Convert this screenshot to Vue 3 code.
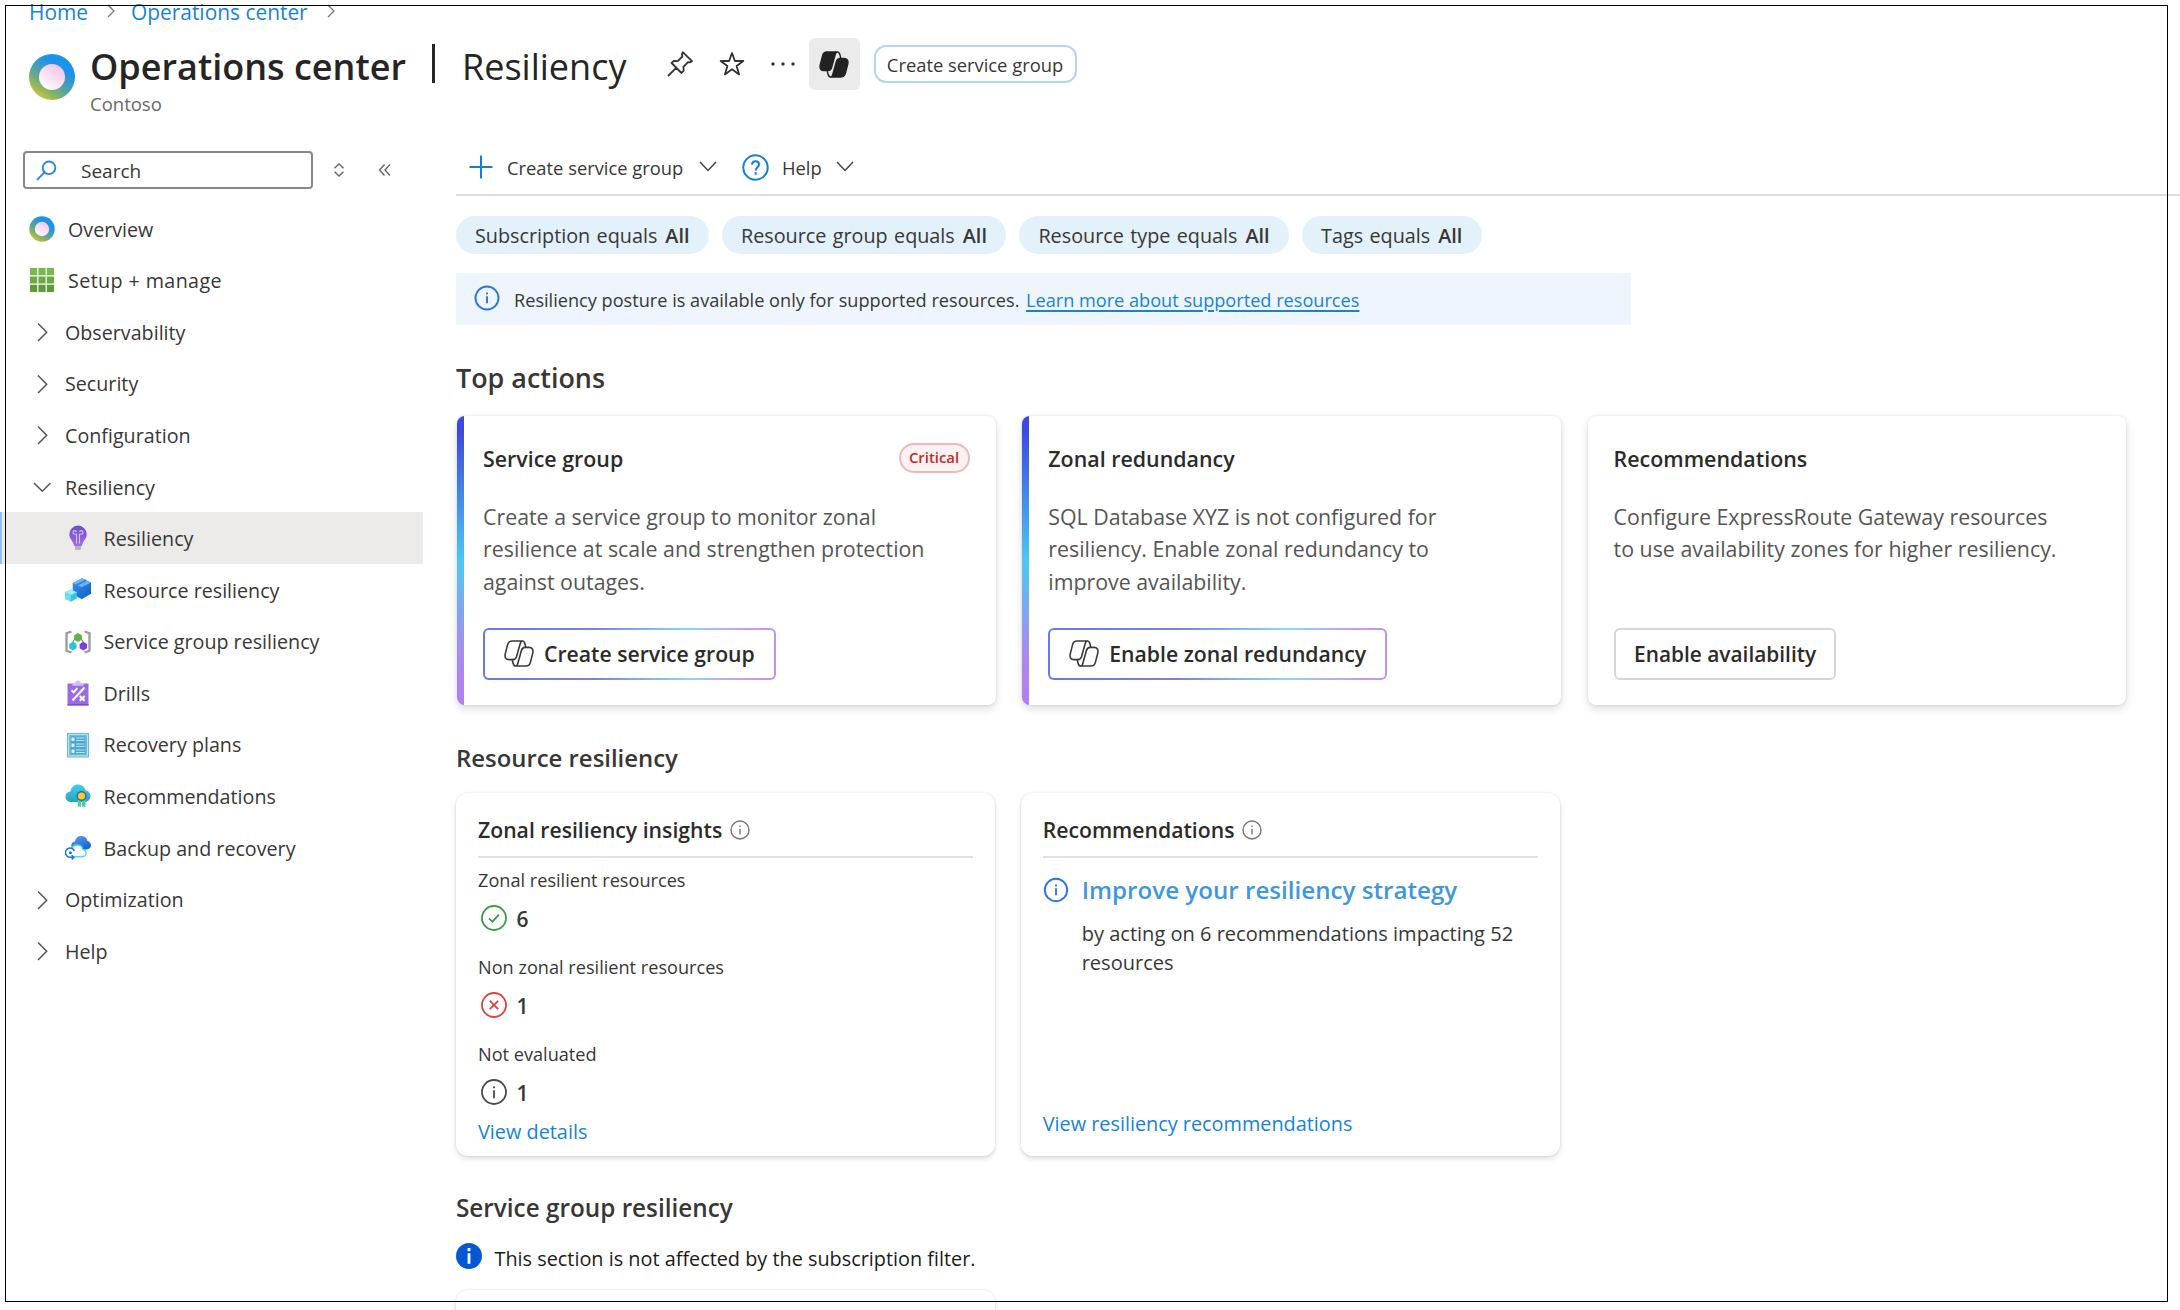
<script setup>
const ring = (id) => `
  <defs>
    <linearGradient id="${id}" x1="0.75" y1="0.1" x2="0.2" y2="0.95">
      <stop offset="0.2" stop-color="#1b93eb"/><stop offset="0.55" stop-color="#57a3a0"/>
      <stop offset="0.8" stop-color="#8fb65a"/><stop offset="1" stop-color="#d8c63c"/>
    </linearGradient>
    <linearGradient id="${id}c" x1="0.8" y1="0" x2="0.2" y2="1">
      <stop offset="0" stop-color="#f6bfe6"/><stop offset="1" stop-color="#ffffff"/>
    </linearGradient>
  </defs>
  <circle cx="23" cy="23" r="23" fill="url(#${id})"/><circle cx="23" cy="23" r="13" fill="url(#${id}c)"/>`

const leaf = 'M18.3 1H8C5.6 1 4.300 2 3.600 4.600L1.300 13.600C.4 17.400 1.800 19.600 5 19.600H9C11 19.600 12 18.400 12.600 16.500L16 4.300C16.500 2.200 17 1 18.300 1Z'
const tail = 'M18.300 1C20 1 20.600 2.200 21 4L21.800 7.400'

const icons = {
  overview: { box: '-0.5 -0.5 47 47', svg: ring('ov') },
  grid: {
    box: '0 0 26 26',
    svg: `<g fill="#7ab648"><path d="M1 1h7.2v7.2H1zM9.4 1h7.2v7.2H9.4zM17.8 1H25v7.2h-7.2z" fill="#79b84c"/>
      <path d="M1 9.4h7.2v7.2H1zM9.4 9.4h7.2v7.2H9.4zM17.8 9.4H25v7.2h-7.2z" fill="#6ea944"/>
      <path d="M1 17.8h7.2V25H1zM9.4 17.8h7.2V25H9.4zM17.8 17.8H25V25h-7.2z" fill="#5f993a"/></g>`
  },
  bulb: {
    box: '0 0 26 26',
    svg: `<defs><linearGradient id="bl" x1="0" y1="0" x2="0" y2="1"><stop offset="0" stop-color="#6a4cc8"/><stop offset="1" stop-color="#a66cf0"/></linearGradient></defs>
      <path d="M13 .6a8.700 8.700 0 0 0-8.700 8.800c0 4.600 4.100 6.300 4.700 11.600h8c.6-5.300 4.700-7 4.700-11.600A8.700 8.700 0 0 0 13 .6z" fill="url(#bl)"/>
      <path d="M11.500 18.500V8.500M14.500 18.500V8.500M11.500 9.200H9.900a1.800 1.800 0 1 1 1.600-2.300M14.500 9.200h1.600a1.800 1.800 0 1 0-1.600-2.300" fill="none" stroke="#d8c2fa" stroke-width="1.100"/>
      <path d="M10 21h6v2.200c0 1-.6 1.800-1.600 1.800h-2.800c-1 0-1.600-.8-1.600-1.800z" fill="#b3b3b3"/>`
  },
  boxes: {
    box: '0 0 26 26',
    svg: `<defs><linearGradient id="bx" x1="0" y1="0" x2="1" y2="1"><stop offset="0" stop-color="#3b93ea"/><stop offset="1" stop-color="#0b5fc4"/></linearGradient></defs>
      <path d="M17 1.200l9 4.400v11.200l-9.300 5.400-9-5V6z" fill="url(#bx)"/>
      <path d="M7.700 6L17 1.200l9 4.400-9.300 4.700z" fill="#6db2f4"/><path d="M11.700 8l9.500-4.700" stroke="#2c80dc" stroke-width="1.600"/>
      <path d="M5.800 12.500l6 2.700v6.300l-6 3.300-5.800-3v-6.600z" fill="#35c4ea"/><path d="M0 15.200l5.800-2.700 6 2.700-5.900 2.900z" fill="#a0ecfb"/><path d="M0 15.200l5.900 2.900v6.700L0 21.800z" fill="#6fdcf5"/>`
  },
  group: {
    box: '0 0 26 26',
    svg: `<path d="M6.500 2.500l-5 1.700v17.600l5 1.700M19.500 2.500l5 1.700v17.600l-5 1.700" fill="none" stroke="#9a9a9a" stroke-width="2.300"/>
      <path d="M12 8.500C9 10 7.500 12.500 7.500 16M14 8.500c3 1.500 4.500 4 4.500 7.500" fill="none" stroke="#8a8a8a" stroke-width="1.200"/>
      <path d="M13 4l3.900 2.200v4.500L13 12.900l-3.900-2.200V6.200z" fill="#5db548"/><path d="M7.900 12.800l3.700 2.200v4.200l-3.700 2.200-3.700-2.200V15z" fill="#2cc3e0"/><path d="M18.300 12.800l3.700 2.200v4.200l-3.700 2.200-3.700-2.200V15z" fill="#7a3fe0"/>`
  },
  drills: {
    box: '0 0 26 26',
    svg: `<path d="M2.500 3.500h21V25.500h-21z" fill="#9b6be6"/><path d="M7.500 3.300h2.800a2.700 2.700 0 0 1 5.400 0h2.800v2.400h-11z" fill="#d2bdf6"/>
      <path d="M19.500 7.500L7.500 20.500M6.500 10.200l2.200 2.200 3.600-4.200M14.700 16l5 4.800M19.700 16l-5 4.800" fill="none" stroke="#fff" stroke-width="2"/><path d="M2.500 24h21v1.500h-21z" fill="#7a4fcb"/>`
  },
  plans: {
    box: '0 0 26 26',
    svg: `<path d="M2 1h22v24.500H2z" fill="#69b7d9"/><path d="M3.600 2.600h18.800v21.300H3.600z" fill="none" stroke="#c9e9f5" stroke-width="1"/>
      <path d="M6 4.500h14v17.500H6z" fill="#4aa5cf"/>
      <path d="M6.500 5.500h3v3.500h-3zM6.500 11.500h3V15h-3zM6.500 17.500h3V21h-3z" fill="#d6f0fa"/><path d="M11 6h8.500M11 8.500h8.500M11 12h8.500M11 14.500h8.500M11 18h8.500M11 20.500h8.500" stroke="#bfe6f5" stroke-width="1.200"/>`
  },
  advisor: {
    box: '0 0 26 26',
    svg: `<defs><linearGradient id="ad" x1="0" y1="0" x2="0" y2="1"><stop offset="0" stop-color="#3fd0ee"/><stop offset="1" stop-color="#2a9fc4"/></linearGradient></defs>
      <path d="M6.500 19C3 19 .5 16.800.5 13.700c0-2.900 2.200-4.900 5-5.200C6 4.200 9 1.500 13 1.500c3.800 0 6.600 2.300 7.400 5.800 2.900.4 5.100 2.700 5.100 5.700 0 3.400-2.600 6-6.200 6z" fill="url(#ad)"/>
      <path d="M12.800 16v8.300l1.900-1.100 1.300 1.600V16zM17 16v8.800l1.400-1.600 2 1.100V16z" fill="#3fcfae"/>
      <circle cx="16.500" cy="13" r="5" fill="#3d6b7d"/><circle cx="16.500" cy="13" r="3.600" fill="#ffc73b"/>`
  },
  backup: {
    box: '0 0 26 26',
    svg: `<defs><linearGradient id="bk" x1="0" y1="0" x2="0.6" y2="1"><stop offset="0" stop-color="#6a9cf0"/><stop offset="1" stop-color="#1268d0"/></linearGradient></defs>
      <path d="M11 14.500c-3 0-4.800-1.600-4.800-4 0-2.300 1.600-3.800 3.800-4.100C10.500 3 13 1 16.300 1c3.200 0 5.500 1.900 6.200 4.900 2.100.4 3.500 2 3.500 4.200 0 2.700-2 4.400-4.600 4.400z" fill="url(#bk)"/>
      <path d="M6.500 21.700V15c.7-3.200 3-5 5.700-5 2.900 0 5 1.800 5.500 4.500 1.900.2 3.300 1.500 3.300 3.500 0 2.200-1.700 3.700-4 3.700z" fill="#fff" stroke="#4fd8f6" stroke-width="1.400"/>
      <path d="M9.400 16A4.600 4.600 0 1 0 5.600 22.200H9M6.700 20.200l2.200 2-2.200 2.200" fill="#fff" stroke="#1f73d8" stroke-width="1.500"/><circle cx="5.400" cy="17.700" r="1.500" fill="#1f73d8"/>`
  }
}

const nav = [
  { label: 'Overview', icon: 'overview' },
  { label: 'Setup + manage', icon: 'grid', wide: true },
  { label: 'Observability' },
  { label: 'Security' },
  { label: 'Configuration' },
  { label: 'Resiliency', open: true },
  { label: 'Resiliency', icon: 'bulb', sub: true, selected: true },
  { label: 'Resource resiliency', icon: 'boxes', sub: true },
  { label: 'Service group resiliency', icon: 'group', sub: true },
  { label: 'Drills', icon: 'drills', sub: true },
  { label: 'Recovery plans', icon: 'plans', sub: true },
  { label: 'Recommendations', icon: 'advisor', sub: true },
  { label: 'Backup and recovery', icon: 'backup', sub: true },
  { label: 'Optimization' },
  { label: 'Help' }
]

const filters = ['Subscription equals', 'Resource group equals', 'Resource type equals', 'Tags equals']

const actions = [
  {
    title: 'Service group', badge: 'Critical', copilot: true, button: 'Create service group',
    lines: ['Create a service group to monitor zonal', 'resilience at scale and strengthen protection', 'against outages.']
  },
  {
    title: 'Zonal redundancy', copilot: true, button: 'Enable zonal redundancy',
    lines: ['SQL Database XYZ is not configured for', 'resiliency. Enable zonal redundancy to', 'improve availability.']
  },
  {
    title: 'Recommendations', button: 'Enable availability',
    lines: ['Configure ExpressRoute Gateway resources', 'to use availability zones for higher resiliency.']
  }
]

const stats = [
  { label: 'Zonal resilient resources', value: 6, color: '#3b9a49', mark: 'M8 13.300l3.400 3.400 6.600-7' },
  { label: 'Non zonal resilient resources', value: 1, color: '#d8453b', mark: 'M8.800 8.800l8.400 8.400M17.200 8.800l-8.400 8.400' },
  { label: 'Not evaluated', value: 1, color: '#4a4a4a', mark: 'M13 11.200v8M13 7.200v2' }
]
</script>

<template>
  <div class="page">
    <nav class="crumbs">
      <a>Home</a>
      <svg width="8" height="14" viewBox="0 0 8 14"><path d="M1 1l6 6-6 6" /></svg>
      <a>Operations center</a>
      <svg width="8" height="14" viewBox="0 0 8 14"><path d="M1 1l6 6-6 6" /></svg>
    </nav>

    <header class="header">
      <svg class="logo" width="46" height="46" viewBox="0 0 46 46" v-html="ring('lg')"></svg>
      <div class="titles">
        <div class="title-row">
          <h1>Operations center</h1>
          <span class="bar"></span>
          <span class="subtitle">Resiliency</span>
        </div>
        <div class="tenant">Contoso</div>
      </div>
      <svg class="pin" width="26" height="26" viewBox="0 0 26 26">
        <path d="M1 25l8.200-8.200M15.800 1.200L25 10.200l-2.300 1.200-1.700-.300-4.600 4.700.3 3.800-2.200 2.400L4.600 12l2.300-2.200 3.800.300 4.700-4.600-.500-2z" />
      </svg>
      <svg class="star" width="26" height="26" viewBox="0 0 26 26">
        <path d="M13 2l2.900 8h8.400l-6.700 5 2.500 8.400L13 18.300l-7.100 5.100L8.400 15l-6.700-5h8.400z" />
      </svg>
      <svg class="dots" width="24" height="6" viewBox="0 0 24 6"><circle cx="2" cy="3" r="1.700" /><circle cx="12" cy="3" r="1.700" /><circle cx="22" cy="3" r="1.700" /></svg>
      <div class="copilot-tile">
        <svg width="30" height="27" viewBox="0 0 30 27">
          <g fill="#222" stroke="#222" stroke-width="1.400" stroke-linejoin="round">
            <path :d="leaf" /><path :d="tail" fill="none" />
            <g transform="rotate(180 15 13.500)"><path :d="leaf" /><path :d="tail" fill="none" /></g>
          </g>
        </svg>
      </div>
      <button class="pill-button">Create service group</button>
    </header>

    <div class="body">
      <aside class="side">
        <div class="search-row">
          <div class="search">
            <svg width="21" height="21" viewBox="0 0 21 21"><circle cx="13" cy="7.800" r="6.300" /><path d="M8.500 12.300L1 19.800" /></svg>
            <span>Search</span>
          </div>
          <svg class="sort" width="12" height="14" viewBox="0 0 12 14"><path d="M1.500 5.300L6 1l4.500 4.300M1.500 8.700L6 13l4.500-4.300" /></svg>
          <svg class="fold" width="13" height="14" viewBox="0 0 13 14"><path d="M6.500 1.500L1.500 7l5 5.500M12 1.500L7 7l5 5.500" /></svg>
        </div>
        <div
          v-for="(item, i) in nav" :key="i" class="nav-item"
          :class="{ sub: item.sub, selected: item.selected, expandable: !item.icon, wide: item.wide }"
        >
          <svg v-if="item.icon" class="nav-icon" width="26" height="26" :viewBox="icons[item.icon].box" v-html="icons[item.icon].svg"></svg>
          <svg v-else class="nav-icon chev" width="26" height="26" viewBox="0 0 26 26">
            <path :d="item.open ? 'M5 9l8.300 8.300L21.500 9' : 'M9 4.500l8.700 8.700L9 22'" />
          </svg>
          <span>{{ item.label }}</span>
        </div>
      </aside>

      <main class="main">
        <div class="toolbar">
          <svg class="blue plus" width="24" height="24" viewBox="0 0 24 24"><path d="M12 .5v23M.5 12h23" /></svg>
          <span class="create">Create service group</span>
          <svg class="down" width="18" height="11" viewBox="0 0 18 11"><path d="M1 1l8 8.500L17 1" /></svg>
          <svg class="blue help" width="27" height="27" viewBox="0 0 27 27">
            <circle cx="13.500" cy="13.500" r="12.200" />
            <path d="M10 10.800c0-2 1.500-3.500 3.500-3.500s3.500 1.400 3.500 3.300c0 2.700-3.300 2.800-3.300 5.900M13.700 18.300v2.400" />
          </svg>
          <span class="help-label">Help</span>
          <svg class="down" width="18" height="11" viewBox="0 0 18 11"><path d="M1 1l8 8.500L17 1" /></svg>
        </div>

        <div class="filters">
          <div v-for="f in filters" :key="f" class="filter"><span>{{ f }}</span><b>All</b></div>
        </div>

        <div class="banner">
          <svg class="info" width="26" height="26" viewBox="0 0 26 26"><circle cx="13" cy="13" r="11.500" /><path d="M13 11.200v7M13 7.600v1.900" /></svg>
          <span class="posture">Resiliency posture is available only for supported resources.</span>
          <a>Learn more about supported resources</a>
        </div>

        <h2 class="first">Top actions</h2>
        <div class="actions">
          <section v-for="a in actions" :key="a.title" class="card" :class="{ accent: a.copilot }">
            <div class="card-head">
              <h3>{{ a.title }}</h3>
              <span v-if="a.badge" class="badge">{{ a.badge }}</span>
            </div>
            <p><template v-for="(l, i) in a.lines" :key="l"><br v-if="i">{{ l }}</template></p>
            <button class="cta" :class="{ gradient: a.copilot }">
              <svg v-if="a.copilot" width="30" height="27" viewBox="0 0 30 27">
                <g fill="none" stroke="#3a3a3a" stroke-width="1.600" stroke-linejoin="round">
                  <path :d="leaf" /><path :d="tail" />
                  <g transform="rotate(180 15 13.500)"><path :d="leaf" /><path :d="tail" /></g>
                </g>
              </svg>
              <span>{{ a.button }}</span>
            </button>
          </section>
        </div>

        <h2>Resource resiliency</h2>
        <div class="panels">
          <section class="panel">
            <div class="panel-head">
              <h3>Zonal resiliency insights</h3>
              <svg class="hint" width="20" height="20" viewBox="0 0 20 20"><circle cx="10" cy="10" r="9" /><path d="M10 8.800v5.700M10 5.600v1.500" /></svg>
            </div>
            <div v-for="s in stats" :key="s.label" class="stat">
              <div class="stat-label">{{ s.label }}</div>
              <div class="stat-value">
                <svg width="26" height="26" viewBox="0 0 26 26" fill="none" :stroke="s.color" stroke-width="1.800">
                  <circle cx="13" cy="13" r="12" /><path :d="s.mark" />
                </svg>
                <b>{{ s.value }}</b>
              </div>
            </div>
            <a class="more">View details</a>
          </section>

          <section class="panel">
            <div class="panel-head">
              <h3>Recommendations</h3>
              <svg class="hint" width="20" height="20" viewBox="0 0 20 20"><circle cx="10" cy="10" r="9" /><path d="M10 8.800v5.700M10 5.600v1.500" /></svg>
            </div>
            <div class="advice">
              <svg class="info" width="26" height="26" viewBox="0 0 26 26"><circle cx="13" cy="13" r="11.200" /><path d="M13 11.200v7M13 7.600v1.900" /></svg>
              <div>
                <h4>Improve your resiliency strategy</h4>
                <p>by acting on 6 recommendations impacting 52<br>resources</p>
              </div>
            </div>
            <a class="more">View resiliency recommendations</a>
          </section>
        </div>

        <h2 class="last">Service group resiliency</h2>
        <div class="note">
          <svg width="26" height="26" viewBox="0 0 26 26"><circle cx="13" cy="13" r="13" fill="#0459d3" /><path d="M13 10.300v10.500M13 5v3.200" stroke="#fff" stroke-width="2.800" /></svg>
          <span>This section is not affected by the subscription filter.</span>
        </div>
        <section class="panel stub"></section>
      </main>
    </div>
    <div class="frame"></div>
  </div>
</template>

<style>
html, body { margin: 0; background: #fff; overflow: hidden; }
</style>

<style scoped>
.page {
  position: relative; width: 2180px; height: 1310px; overflow: hidden;
  background: #fff; color: #383736;
  font-family: "Open Sans", "Noto Sans", sans-serif; font-size: 19.7px; white-space: nowrap;
}
.page * { box-sizing: border-box; }
h1, h2, h3, h4, p { margin: 0; font-weight: 600; }
svg { flex: none; display: block; }
button { font: inherit; color: inherit; background: #fff; }
.frame { position: absolute; left: 5px; top: 5px; width: 2163px; height: 1297px; border: 1px solid #000; pointer-events: none; }

.crumbs { display: flex; align-items: center; height: 24px; padding-left: 29px; line-height: 24px; font-size: 20.900px; }
.crumbs a { color: #1683d8; }
.crumbs a:first-child { width: 78px; }
.crumbs a:nth-of-type(2) { margin-left: 16px; width: 196px; }
.crumbs svg { fill: none; stroke: #777; stroke-width: 1.3; margin-bottom: 3px; }

.header { display: flex; align-items: flex-start; height: 116px; padding-left: 29px; }
.logo { margin-top: 29.500px; }
.titles { margin-left: 15px; width: 577px; }
.title-row { display: flex; height: 50px; margin-top: 17px; line-height: 51px; font-size: 36px; color: #262524; }
h1 { font-size: inherit; width: 342px; }
.bar { width: 3px; height: 39px; margin-top: 3px; background: #262524; }
.subtitle { margin-left: 27px; font-size: 36px; }
.tenant { margin-top: 1px; font-size: 18.500px; line-height: 24px; color: #6a6866; }
.pin, .star { fill: none; stroke: #333; stroke-width: 1.800; stroke-linejoin: round; }
.pin { margin-top: 27px; }
.star { margin: 27px 0 0 25.500px; }
.dots { margin: 37px 0 0 26px; fill: #333; }
.copilot-tile { display: flex; align-items: center; justify-content: center; width: 51px; height: 52px; margin: 14px 0 0 14px; border-radius: 6px; background: #ebebeb; }
.pill-button { width: 203px; height: 38px; margin: 21px 0 0 14px; padding: 0; border: 2px solid #b4d3f6; border-radius: 12px; font-size: 18.350px; line-height: 35px; }

.body { display: flex; }
.side { width: 456px; }
.search-row { display: flex; align-items: center; height: 62.500px; padding: 11px 0 13.500px 23px; }
.search { display: flex; align-items: center; width: 290px; height: 38.500px; padding-left: 11px; border: 2px solid #8a8886; border-radius: 4px; font-size: 19px; }
.search svg { fill: none; stroke: #2b88d8; stroke-width: 1.900; margin-right: 24px; }
.search span { padding-top: 1.500px; }
.sort { margin-left: 20px; fill: none; stroke: #666; stroke-width: 1.400; }
.fold { margin-left: 33px; fill: none; stroke: #666; stroke-width: 1.400; }
.nav-item { display: flex; align-items: center; height: 51.600px; padding-left: 29px; font-size: 19.700px; }
.nav-icon { margin-top: 1px; }
.nav-item span { margin-left: 13px; padding-top: 1.500px; }
.nav-item.expandable span { margin-left: 10px; }
.nav-item.wide span { letter-spacing: .400px; }
.nav-item.sub { padding-left: 64.500px; }
.nav-item.sub span { margin-left: 13px; }
.nav-item.selected { width: 423px; padding-left: 62.500px; background: #edebe9; border-left: 2px solid #8fbfeb; }
.chev { fill: none; stroke: #555; stroke-width: 1.500; }

.main { width: 1724px; }
.toolbar { display: flex; align-items: center; height: 56px; padding-left: 13px; border-bottom: 2px solid #dedede; font-size: 18.350px; }
.blue { fill: none; stroke: #0f7fd8; stroke-width: 2; }
.create { margin-left: 14px; width: 191.500px; }
.down { fill: none; stroke: #444; stroke-width: 1.500; margin-top: -1px; }
.help { margin-left: 25.500px; }
.help-label { margin-left: 13px; width: 54px; }

.filters { display: flex; gap: 13px; margin-top: 19.500px; }
.filter { display: flex; height: 38.500px; padding: 0 19.500px 0 19px; border-radius: 20px; background: #e3f1fa; line-height: 40px; font-size: 19.800px; word-spacing: 1.200px; }
.filter b { margin-left: 8px; font-weight: 600; }

.banner { display: flex; align-items: center; width: 1175px; height: 52px; margin-top: 19px; padding: 1px 0 0 18px; background: #eef5fd; font-size: 18.150px; }
.info { fill: none; stroke: #2a74e4; stroke-width: 1.900; }
.banner .info { margin-top: -4px; }
.posture { margin-left: 14px; width: 512px; }
.banner a { color: #1683d8; text-decoration: underline; text-underline-offset: 3px; text-decoration-thickness: 1.500px; }

h2 { margin-top: 36px; font-size: 23.900px; line-height: 32px; color: #383736; }
h2.first { margin-top: 34.500px; font-size: 26.900px; line-height: 36px; }
h2.last { margin-top: 35.500px; font-size: 24.300px; }

.actions { display: flex; gap: 26.800px; margin: 20px 0 0 1px; }
.card { display: flex; flex-direction: column; align-items: flex-start; width: 538.500px; height: 289.500px; margin-bottom: .500px; padding: 28px 26px 25.500px; border-radius: 8px; background: #fff; box-shadow: 0 0 3px rgba(0,0,0,.11), 0 4px 8px rgba(0,0,0,.13); }
.card.accent { background: linear-gradient(180deg, #3d48e0 5%, #4bc8f4 50%, #a98af0 82%, #b37df0) left / 7px 100% no-repeat, #fff; }
.card-head { display: flex; justify-content: space-between; width: 100%; height: 30px; }
h3 { font-size: 21.300px; line-height: 30px; color: #2c2b2a; }
.card h3 { font-size: 21.400px; }
.badge { width: 71px; height: 30px; margin: -1px 0 0 0; border: 2px solid #efb9bb; border-radius: 15px; background: #fdf1f2; color: #bd2d2c; font-size: 14.900px; font-weight: 600; line-height: 25px; text-align: center; }
.card p { margin-top: 27.500px; font-size: 21.350px; font-weight: 400; line-height: 32.400px; color: #565554; }
.cta { display: flex; align-items: center; gap: 10.500px; height: 52px; margin-top: auto; padding: 0 19px 0 18.500px; border: 2px solid #d6d6d6; border-radius: 6px; font-size: 21.200px; font-weight: 600; color: #2c2b2a; }
.cta.gradient { border-color: transparent; background: linear-gradient(#fff, #fff) padding-box, linear-gradient(90deg, #6a78e8 0%, #7c80e6 38%, #86d8f8 70%, #c6a0f2 88%, #bf93f0) border-box; }
.card:not(.accent) .cta { font-size: 20.850px; padding-right: 18px; }

.panels { display: flex; gap: 25.700px; margin-top: 19.500px; }
.panel { display: flex; flex-direction: column; width: 539px; height: 363px; padding: 22px 22px 19px; border-radius: 12px; background: #fff; box-shadow: 0 0 3px rgba(0,0,0,.1), 0 3px 5px rgba(0,0,0,.12); }
.panel-head { display: flex; align-items: center; flex: none; gap: 7.500px; height: 42.500px; padding-bottom: 10.500px; border-bottom: 2px solid #e1e1e1; }
.panel-head h3 { font-size: 21.200px; }
.hint { fill: none; stroke: #777; stroke-width: 1.400; }
.stat { height: 87px; margin-top: 10.500px; margin-bottom: -10.500px; }
.stat-label { font-size: 18.150px; line-height: 25px; }
.stat-value { display: flex; align-items: center; height: 36px; margin-top: 7px; padding-left: 3px; }
.stat-value b { margin: 2px 0 0 9.500px; font-size: 21px; font-weight: 600; line-height: 34px; }
.more { margin-top: auto; color: #1683d8; font-size: 19.850px; line-height: 26px; }
.panel:first-child { padding-bottom: 11px; }
.advice { display: flex; margin-top: 16px; }
.advice .info { margin-top: 3px; }
.advice > div { margin-left: 13px; }
h4 { font-size: 24.150px; line-height: 32px; color: #3f97dc; }
.advice p { margin-top: 13.500px; font-weight: 400; font-size: 20.050px; line-height: 29px; }

.note { display: flex; align-items: center; height: 30px; margin-top: 19.500px; color: #1b1a19; font-size: 19.850px; }
.note svg { margin-top: -5px; }
.note span { margin-left: 12.500px; }
.stub { margin-top: 17px; }
</style>
